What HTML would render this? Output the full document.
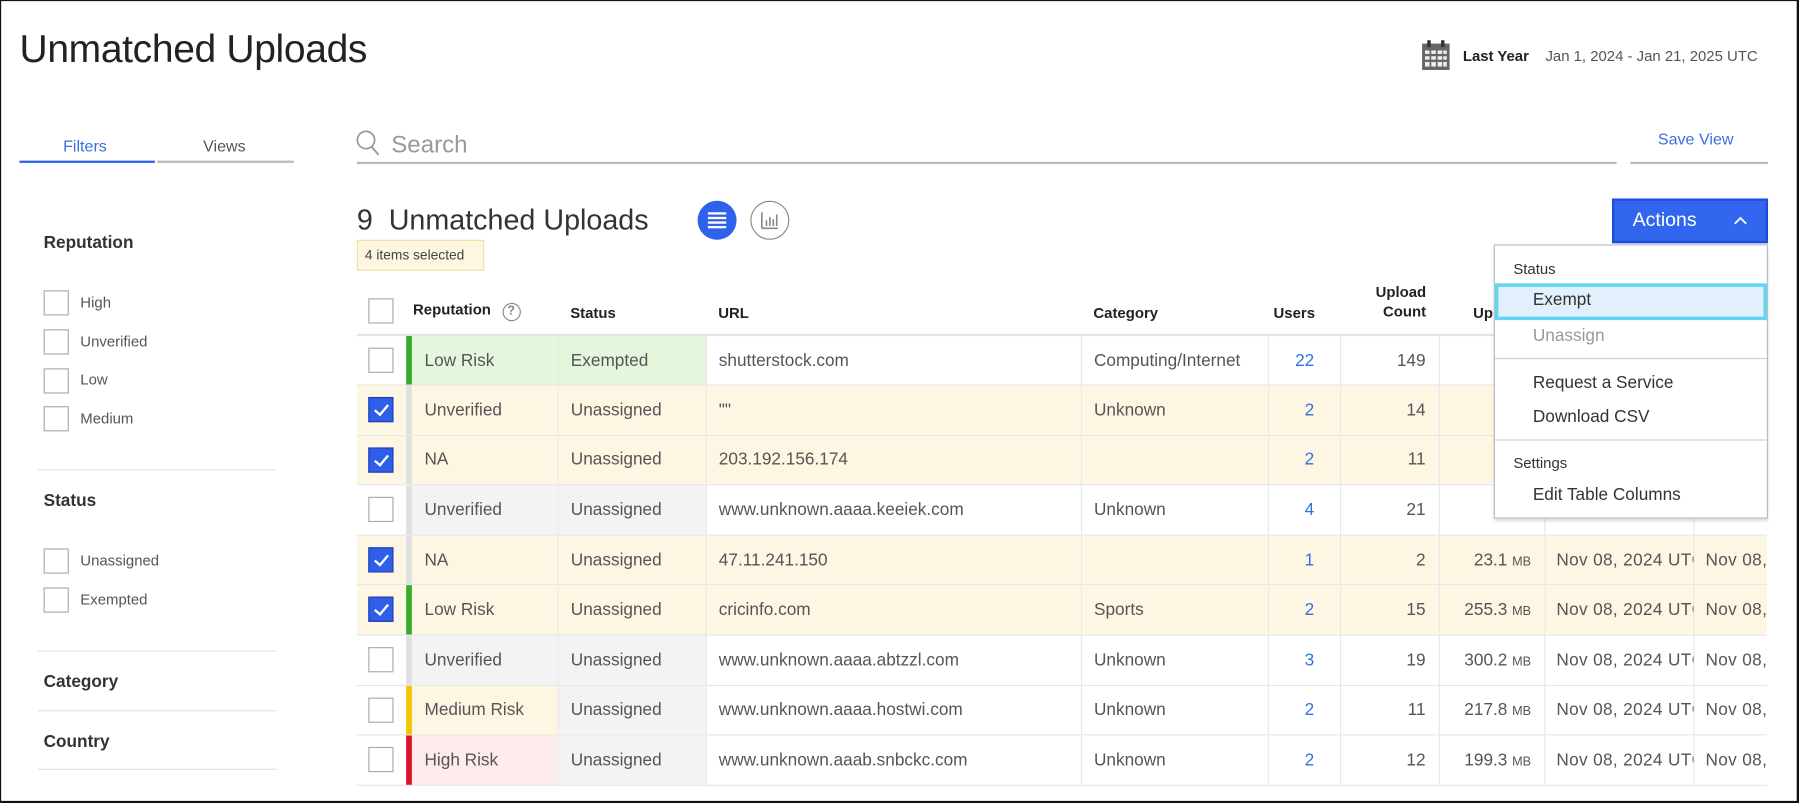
<!DOCTYPE html>
<html><head><meta charset="utf-8">
<style>
*{box-sizing:border-box;margin:0;padding:0}
html,body{width:1799px;height:803px;overflow:hidden;background:#fff}
#w{position:absolute;left:0;top:0;width:1568px;height:700px;transform:scale(1.14732);transform-origin:0 0;font-family:"Liberation Sans",sans-serif;color:#444;border:1.5px solid #111;border-right-width:2px;border-bottom-width:2px}
.a{position:absolute;white-space:nowrap}
.cb{position:absolute;width:22px;height:22px;border:1px solid #aaa;background:#fff}
.ck{background:#2f5fe9;border:1px solid #1c3fb0}
.ck:after{content:"";position:absolute;left:7px;top:3px;width:5px;height:10px;border:solid #fff;border-width:0 2.5px 2.5px 0;transform:rotate(40deg)}
table{position:absolute;left:310px;top:245px;width:1229px;border-collapse:collapse;table-layout:fixed;font-size:15px}
td,th{height:43.6px;overflow:hidden;white-space:nowrap;padding:0 0 0 11px;border-bottom:1px solid #e6e6e6;border-left:1px solid #e6e6e6;color:#555;position:relative}
th{height:45px;border-left:none;border-bottom:2px solid #e3e3e3;font-size:13px;font-weight:bold;color:#222;text-align:left;vertical-align:bottom;padding-bottom:11px}
td.c{border-left:none;padding:0}
td.bar{padding:0;border-left:none}
td.r{text-align:right;padding:0 11px 0 0}
td.u{text-align:right;padding:0 22px 0 0;color:#2f72e0}
td.d{padding-left:10px;letter-spacing:0.3px}
.y td{background:#fdf6e3}
.g{background:#f3f3f3!important}
.gr{background:#e4f6dc!important}
.pk{background:#fdeaec!important}
.ye{background:#fdf6e3!important}
.mb{font-size:11px}
.bx{position:absolute;left:10px;top:10px}
.menu div{position:absolute;white-space:nowrap}
</style></head><body><div id="w">
<div class="a" style="left:16px;top:23px;font-size:34px;color:#222;letter-spacing:-0.3px">Unmatched Uploads</div>
<svg class="a" style="left:1238px;top:34px" width="25" height="27" viewBox="0 0 25 27"><rect x="0.5" y="3" width="24" height="23" fill="#666"/><rect x="5" y="0" width="3" height="6" fill="#333"/><rect x="17" y="0" width="3" height="6" fill="#333"/><g fill="#eee"><rect x="3" y="9" width="4" height="3"/><rect x="8.5" y="9" width="4" height="3"/><rect x="14" y="9" width="4" height="3"/><rect x="19" y="9" width="3" height="3"/><rect x="3" y="14" width="4" height="3"/><rect x="8.5" y="14" width="4" height="3"/><rect x="14" y="14" width="4" height="3"/><rect x="19" y="14" width="3" height="3"/><rect x="3" y="19" width="4" height="4"/><rect x="8.5" y="19" width="4" height="4"/><rect x="14" y="19" width="4" height="4"/><rect x="19" y="19" width="3" height="4"/></g></svg>
<div class="a" style="left:1274px;top:40px;font-size:13px;font-weight:bold;color:#222">Last Year</div>
<div class="a" style="left:1346px;top:40px;font-size:13px;color:#555">Jan 1, 2024 - Jan 21, 2025 UTC</div>

<div class="a" style="left:54px;top:118px;font-size:14px;color:#3a6fe0">Filters</div>
<div class="a" style="left:176px;top:118px;font-size:14px;color:#555">Views</div>
<div class="a" style="left:16px;top:139px;width:118px;height:2px;background:#2f62e6"></div>
<div class="a" style="left:136px;top:139px;width:119px;height:2px;background:#bbb"></div>

<svg class="a" style="left:309px;top:112px" width="22" height="24" viewBox="0 0 22 24"><circle cx="9" cy="9" r="7.5" fill="none" stroke="#999" stroke-width="1.5"/><line x1="14" y1="15" x2="20" y2="22" stroke="#999" stroke-width="1.6"/></svg>
<div class="a" style="left:340px;top:114px;font-size:21px;color:#999">Search</div>
<div class="a" style="left:310px;top:140px;width:1098px;height:2px;background:#bbb"></div>
<div class="a" style="left:1444px;top:112px;font-size:14px;color:#3a6fe0">Save View</div>
<div class="a" style="left:1420px;top:140px;width:120px;height:2px;background:#bbb"></div>

<div class="a" style="left:310px;top:177px;font-size:25px;color:#333">9&nbsp; Unmatched Uploads</div>
<div class="a" style="left:607px;top:174px;width:34px;height:34px;border-radius:50%;background:#2f62ea"></div>
<div class="a" style="left:616px;top:184px;width:16px;height:2px;background:#fff;box-shadow:0 4px 0 #fff,0 8px 0 #fff,0 12px 0 #fff"></div>
<div class="a" style="left:653px;top:174px;width:34px;height:34px;border-radius:50%;border:1.5px solid #888"></div>
<svg class="a" style="left:661px;top:182px" width="18" height="18" viewBox="0 0 18 18"><g stroke="#888" stroke-width="1.4"><line x1="2" y1="2" x2="2" y2="16"/><line x1="2" y1="16" x2="16" y2="16"/><line x1="6" y1="9" x2="6" y2="14"/><line x1="9" y1="6" x2="9" y2="14"/><line x1="12" y1="8" x2="12" y2="14"/><line x1="15" y1="4" x2="15" y2="14"/></g></svg>
<div class="a" style="left:310px;top:208px;width:111px;height:27px;background:#fdf6e0;border:1px solid #f4dfa0;font-size:12px;color:#444;padding:5px 0 0 6px">4 items selected</div>

<div class="a" style="left:37px;top:202px;font-size:15px;font-weight:bold;color:#333">Reputation</div>
<div class="cb" style="left:37px;top:252px"></div><div class="a" style="left:69px;top:255px;font-size:13px;color:#555">High</div>
<div class="cb" style="left:37px;top:286px"></div><div class="a" style="left:69px;top:289px;font-size:13px;color:#555">Unverified</div>
<div class="cb" style="left:37px;top:320px"></div><div class="a" style="left:69px;top:322px;font-size:13px;color:#555">Low</div>
<div class="cb" style="left:37px;top:353px"></div><div class="a" style="left:69px;top:356px;font-size:13px;color:#555">Medium</div>
<div class="a" style="left:32px;top:408px;width:208px;height:1px;background:#e2e2e2"></div>
<div class="a" style="left:37px;top:427px;font-size:15px;font-weight:bold;color:#333">Status</div>
<div class="cb" style="left:37px;top:477px"></div><div class="a" style="left:69px;top:480px;font-size:13px;color:#555">Unassigned</div>
<div class="cb" style="left:37px;top:511px"></div><div class="a" style="left:69px;top:514px;font-size:13px;color:#555">Exempted</div>
<div class="a" style="left:32px;top:566px;width:208px;height:1px;background:#e2e2e2"></div>
<div class="a" style="left:37px;top:585px;font-size:15px;font-weight:bold;color:#333">Category</div>
<div class="a" style="left:32px;top:618px;width:208px;height:1px;background:#e2e2e2"></div>
<div class="a" style="left:37px;top:637px;font-size:15px;font-weight:bold;color:#333">Country</div>
<div class="a" style="left:32px;top:669px;width:208px;height:1px;background:#e2e2e2"></div>

<table>
<colgroup><col style="width:43px"><col style="width:5px"><col style="width:127px"><col style="width:129px"><col style="width:327px"><col style="width:163px"><col style="width:63px"><col style="width:86px"><col style="width:92px"><col style="width:130px"><col style="width:64px"></colgroup>
<tr><th style="padding:0"><div class="cb" style="left:10px;top:14px"></div></th><th style="padding:0"></th><th style="padding-left:1px">Reputation <span style="display:inline-block;width:16px;height:16px;border:1.5px solid #888;border-radius:50%;font-size:11px;color:#888;text-align:center;line-height:13px;margin-left:6px">?</span></th><th>Status</th><th>URL</th><th>Category</th><th style="padding-left:5px">Users</th><th style="text-align:right;padding-right:11px;line-height:17px">Upload<br>Count</th><th style="padding-left:30px">Up</th><th></th><th></th></tr>
<tr><td class="c"><div class="cb bx"></div></td><td class="bar" style="background:#3aaa2a"></td><td class="gr" style="border-left:none">Low Risk</td><td class="gr">Exempted</td><td>shutterstock.com</td><td>Computing/Internet</td><td class="u">22</td><td class="r">149</td><td class="r">2</td><td></td><td></td></tr>
<tr class="y"><td class="c"><div class="cb ck bx"></div></td><td class="bar" style="background:#e0e0e0"></td><td style="border-left:none">Unverified</td><td>Unassigned</td><td>""</td><td>Unknown</td><td class="u">2</td><td class="r">14</td><td class="r">186.</td><td></td><td></td></tr>
<tr class="y"><td class="c"><div class="cb ck bx"></div></td><td class="bar" style="background:#e0e0e0"></td><td style="border-left:none">NA</td><td>Unassigned</td><td>203.192.156.174</td><td></td><td class="u">2</td><td class="r">11</td><td class="r">17</td><td></td><td></td></tr>
<tr><td class="c"><div class="cb bx"></div></td><td class="bar" style="background:#e0e0e0"></td><td class="g" style="border-left:none">Unverified</td><td class="g">Unassigned</td><td>www.unknown.aaaa.keeiek.com</td><td>Unknown</td><td class="u">4</td><td class="r">21</td><td class="r">230.</td><td></td><td></td></tr>
<tr class="y"><td class="c"><div class="cb ck bx"></div></td><td class="bar" style="background:#e0e0e0"></td><td style="border-left:none">NA</td><td>Unassigned</td><td>47.11.241.150</td><td></td><td class="u">1</td><td class="r">2</td><td class="r">23.1 <span class="mb">MB</span></td><td class="d">Nov 08, 2024 UTC</td><td class="d">Nov 08, 2024</td></tr>
<tr class="y"><td class="c"><div class="cb ck bx"></div></td><td class="bar" style="background:#3aaa2a"></td><td style="border-left:none">Low Risk</td><td>Unassigned</td><td>cricinfo.com</td><td>Sports</td><td class="u">2</td><td class="r">15</td><td class="r">255.3 <span class="mb">MB</span></td><td class="d">Nov 08, 2024 UTC</td><td class="d">Nov 08, 2024</td></tr>
<tr><td class="c"><div class="cb bx"></div></td><td class="bar" style="background:#e0e0e0"></td><td class="g" style="border-left:none">Unverified</td><td class="g">Unassigned</td><td>www.unknown.aaaa.abtzzl.com</td><td>Unknown</td><td class="u">3</td><td class="r">19</td><td class="r">300.2 <span class="mb">MB</span></td><td class="d">Nov 08, 2024 UTC</td><td class="d">Nov 08, 2024</td></tr>
<tr><td class="c"><div class="cb bx"></div></td><td class="bar" style="background:#f5c400"></td><td class="ye" style="border-left:none">Medium Risk</td><td class="g">Unassigned</td><td>www.unknown.aaaa.hostwi.com</td><td>Unknown</td><td class="u">2</td><td class="r">11</td><td class="r">217.8 <span class="mb">MB</span></td><td class="d">Nov 08, 2024 UTC</td><td class="d">Nov 08, 2024</td></tr>
<tr><td class="c"><div class="cb bx"></div></td><td class="bar" style="background:#d9142a"></td><td class="pk" style="border-left:none">High Risk</td><td class="g">Unassigned</td><td>www.unknown.aaab.snbckc.com</td><td>Unknown</td><td class="u">2</td><td class="r">12</td><td class="r">199.3 <span class="mb">MB</span></td><td class="d">Nov 08, 2024 UTC</td><td class="d">Nov 08, 2024</td></tr>
</table>

<div class="a" style="left:1404px;top:172px;width:136px;height:39px;background:#3366ee;border:2px solid #1f4bdc"></div>
<div class="a" style="left:1422px;top:181px;font-size:17px;color:#fff">Actions</div>
<svg class="a" style="left:1509px;top:186px" width="14" height="10" viewBox="0 0 14 10"><polyline points="2,8 7,3 12,8" fill="none" stroke="#fff" stroke-width="1.5"/></svg>

<div class="a menu" style="left:1301px;top:212px;width:239px;height:239px;background:#fff;border:1px solid #bbb;box-shadow:0 2px 3px rgba(0,0,0,.15)">
<div style="left:16px;top:13px;font-size:13px;color:#333">Status</div>
<div style="left:0;top:33px;width:237px;height:32px;background:#e2effc;border:3px solid #5fd6f2"></div>
<div style="left:33px;top:39px;font-size:15px;color:#333">Exempt</div>
<div style="left:33px;top:70px;font-size:15px;color:#999">Unassign</div>
<div style="left:0;top:98px;width:237px;height:1px;background:#ccc"></div>
<div style="left:33px;top:111px;font-size:15px;color:#333">Request a Service</div>
<div style="left:33px;top:141px;font-size:15px;color:#333">Download CSV</div>
<div style="left:0;top:169px;width:237px;height:1px;background:#ccc"></div>
<div style="left:16px;top:182px;font-size:13px;color:#333">Settings</div>
<div style="left:33px;top:209px;font-size:15px;color:#333">Edit Table Columns</div>
</div>
</div></body></html>
